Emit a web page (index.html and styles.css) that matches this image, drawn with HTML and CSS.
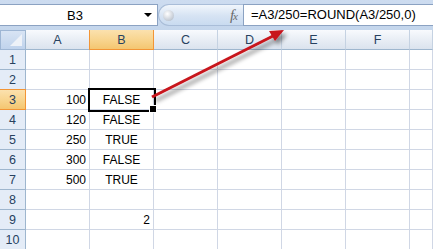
FILE: index.html
```html
<!DOCTYPE html>
<html lang="en">

<head>
    <meta charset="UTF-8">
    <title>Sheet</title>
    <link rel="stylesheet" href="styles.css">
</head>

<body>
    <div class="formula-bar">
        <div class="name-box">
            <span class="name">B3</span>
            <span class="drop"></span>
        </div>
        <div class="grip">
            <span class="knob"></span>
            <span class="fx">f<i>x</i></span>
        </div>
        <div class="formula">=A3/250=ROUND(A3/250,0)</div>
    </div>

    <div class="sheet">
        <div class="corner"><span></span></div>
        <div class="col-head">A</div>
        <div class="col-head sel">B</div>
        <div class="col-head">C</div>
        <div class="col-head">D</div>
        <div class="col-head">E</div>
        <div class="col-head">F</div>
        <div class="col-head"></div>

        <div class="row-head">1</div>
        <div class="cell"></div><div class="cell"></div><div class="cell"></div><div class="cell"></div><div class="cell"></div><div class="cell"></div><div class="cell"></div>

        <div class="row-head">2</div>
        <div class="cell"></div><div class="cell"></div><div class="cell"></div><div class="cell"></div><div class="cell"></div><div class="cell"></div><div class="cell"></div>

        <div class="row-head sel">3</div>
        <div class="cell num">100</div><div class="cell bool active">FALSE</div><div class="cell"></div><div class="cell"></div><div class="cell"></div><div class="cell"></div><div class="cell"></div>

        <div class="row-head">4</div>
        <div class="cell num">120</div><div class="cell bool">FALSE</div><div class="cell"></div><div class="cell"></div><div class="cell"></div><div class="cell"></div><div class="cell"></div>

        <div class="row-head">5</div>
        <div class="cell num">250</div><div class="cell bool">TRUE</div><div class="cell"></div><div class="cell"></div><div class="cell"></div><div class="cell"></div><div class="cell"></div>

        <div class="row-head">6</div>
        <div class="cell num">300</div><div class="cell bool">FALSE</div><div class="cell"></div><div class="cell"></div><div class="cell"></div><div class="cell"></div><div class="cell"></div>

        <div class="row-head">7</div>
        <div class="cell num">500</div><div class="cell bool">TRUE</div><div class="cell"></div><div class="cell"></div><div class="cell"></div><div class="cell"></div><div class="cell"></div>

        <div class="row-head">8</div>
        <div class="cell"></div><div class="cell"></div><div class="cell"></div><div class="cell"></div><div class="cell"></div><div class="cell"></div><div class="cell"></div>

        <div class="row-head">9</div>
        <div class="cell"></div><div class="cell num">2</div><div class="cell"></div><div class="cell"></div><div class="cell"></div><div class="cell"></div><div class="cell"></div>

        <div class="row-head">10</div>
        <div class="cell"></div><div class="cell"></div><div class="cell"></div><div class="cell"></div><div class="cell"></div><div class="cell"></div><div class="cell"></div>
    </div>

    <!-- callout arrow from B3 to the formula -->
    <svg class="arrow" width="433" height="249" viewBox="0 0 433 249">
        <defs>
            <filter id="shade" x="-20%" y="-40%" width="140%" height="180%">
                <feDropShadow dx="3" dy="4" stdDeviation="2" flood-color="#000" flood-opacity="0.45" />
            </filter>
        </defs>
        <g filter="url(#shade)">
            <line x1="152" y1="97" x2="273" y2="36" stroke="#c8141c" stroke-width="3" />
            <polygon points="284,30 275,41 269,31" fill="#c8141c" />
        </g>
    </svg>
</body>

</html>
```

FILE: styles.css
```css
* {
    margin: 0;
    padding: 0;
    box-sizing: border-box;
}

html,
body {
    width: 433px;
    height: 249px;
    overflow: hidden;
}

body {
    position: relative;
    background: #fff;
    font-family: "Liberation Sans", Arial, sans-serif;
    font-size: 12px;
    color: #000;
}

/* formula bar */
.formula-bar {
    display: flex;
    height: 30px;
    padding-top: 4px;
    background: linear-gradient(#cddcf0, #c4d6ec);
}

.name-box {
    display: flex;
    align-items: center;
    width: 158px;
    height: 22px;
    background: #fff;
    border: 1px solid #8ba2c2;
    border-left: none;
}

.name-box .name {
    flex: 1;
    text-align: center;
    font-size: 13px;
    padding-left: 6px;
}

.name-box .drop {
    width: 0;
    height: 0;
    margin-right: 5px;
    border-left: 4px solid transparent;
    border-right: 4px solid transparent;
    border-top: 4px solid #000;
}

.grip {
    display: flex;
    align-items: center;
    justify-content: space-between;
    width: 85px;
    height: 22px;
    padding: 0 6px 0 4px;
    border: 1px solid #a9bdd8;
    border-right: none;
    border-radius: 11px 0 0 11px;
    background: linear-gradient(#f1f6fc, #d6e3f3 55%, #c9dbf0);
}

.knob {
    width: 11px;
    height: 11px;
    border-radius: 50%;
    background: radial-gradient(circle at 40% 35%, #fff, #c3cad4 70%, #9aa4b2);
}

.fx {
    font-family: "Liberation Serif", serif;
    font-style: italic;
    font-size: 15px;
    color: #6a6a6a;
    letter-spacing: -1px;
}

.fx i {
    font-size: 11px;
}

.formula {
    flex: 1;
    height: 22px;
    padding-left: 7px;
    background: #fff;
    border: 1px solid #8ba2c2;
    border-right: none;
    font-size: 13px;
    line-height: 20px;
    white-space: nowrap;
}

/* grid */
.sheet {
    display: grid;
    grid-template-columns: 26px repeat(6, 64px) 1fr;
    grid-auto-rows: 20px;
}

.corner {
    position: relative;
    background: linear-gradient(#d8e4f4, #c0d3ec);
    border: 1px solid #9eb6d4;
    border-right-color: #9eb6ce;
}

.corner span {
    position: absolute;
    right: 3px;
    bottom: 3px;
    width: 0;
    height: 0;
    border-left: 12px solid transparent;
    border-bottom: 12px solid #eef2f8;
}

.col-head,
.row-head {
    display: flex;
    justify-content: center;
    align-items: flex-end;
    padding-bottom: 2px;
    color: #27415f;
    font-size: 12.5px;
}

.col-head {
    background: linear-gradient(#f8fafd, #e9eef5 50%, #dbe3ee);
    border-right: 1px solid #c5d2e2;
    border-bottom: 1px solid #9eb6ce;
}

.row-head {
    background: #e4ecf7;
    border-right: 1px solid #9eb6ce;
    border-bottom: 1px solid #9eb6ce;
}

.col-head.sel,
.row-head.sel {
    background: linear-gradient(#fbe1ae, #f8d590 50%, #f4c670);
    border-color: #f29536;
}

.row-head.sel {
    border-top: 1px solid #f29536;
    margin-top: -1px;
}

.col-head.sel {
    border-left: 1px solid #f29536;
    margin-left: -1px;
}

.cell {
    display: flex;
    align-items: flex-end;
    padding-bottom: 2px;
    border-right: 1px solid #d0d7e5;
    border-bottom: 1px solid #d0d7e5;
}

.num {
    justify-content: flex-end;
    padding-right: 3px;
}

.bool {
    justify-content: center;
}

.active {
    position: relative;
    z-index: 1;
    outline: 2px solid #000;
    outline-offset: 0;
}

.active::after {
    content: "";
    position: absolute;
    right: -4px;
    bottom: -4px;
    width: 6px;
    height: 6px;
    background: #000;
    border: 1px solid #fff;
}

.arrow {
    position: absolute;
    top: 0;
    left: 0;
    pointer-events: none;
    z-index: 2;
}
```
